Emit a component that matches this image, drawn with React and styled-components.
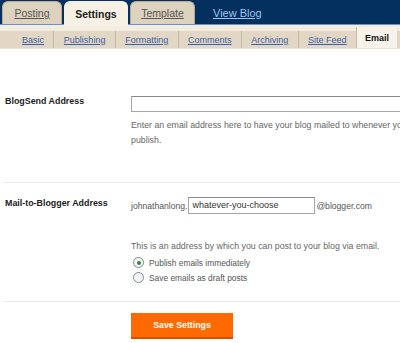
import React from 'react'
import styled, { createGlobalStyle } from 'styled-components'

const GlobalStyle = createGlobalStyle`
  html, body {
    margin: 0;
    padding: 0;
    background: #fff;
    overflow: hidden;
  }
  body {
    font-family: "Liberation Sans", Arial, sans-serif;
    color: #333;
  }
`

const Page = styled.div`
  width: 400px;
  height: 343px;
  overflow: hidden;
`

const TopBar = styled.div`
  height: 25px;
  background: #04305f;
  border-bottom: 1px solid #6f8fc4;
  display: flex;
  align-items: flex-end;
  gap: 2px;
  padding-left: 2px;
  box-sizing: border-box;
`

const Tab = styled.a`
  height: ${p => (p.active ? '25px' : '23px')};
  margin-bottom: ${p => (p.active ? '-2px' : '0')};
  width: ${p => p.w}px;
  display: flex;
  align-items: center;
  justify-content: center;
  box-sizing: border-box;
  border-radius: 6px 6px 0 0;
  background: ${p => (p.active ? '#f6f0e5' : '#ddd2bd')};
  border: 1px solid ${p => (p.active ? '#f6f0e5' : '#b8ab92')};
  border-bottom: none;
  font-size: 10.5px;
  font-weight: ${p => (p.active ? 'bold' : 'normal')};
  color: ${p => (p.active ? '#222' : '#555')};
  text-decoration: ${p => (p.active ? 'none' : 'underline')};
  position: relative;
  z-index: 1;
`

const ViewBlog = styled.a`
  align-self: center;
  margin-left: 16px;
  margin-top: 2px;
  font-size: 11px;
  color: #9cc4f0;
  text-decoration: underline;
`

const Strip = styled.div`
  height: 6px;
  background: #f3ede1;
`

const SubNav = styled.div`
  height: 17px;
  background: #e1d7c4;
  display: flex;
  justify-content: flex-end;
  padding-right: 3px;
  border-bottom: 1px solid #ede6d8;
`

const SubItem = styled.a`
  display: flex;
  align-items: center;
  flex-shrink: 0;
  white-space: nowrap;
  padding: 0 ${p => (p.active ? '8px' : '9.4px')};
  border-left: 1px solid #c4b89f;
  margin-top: ${p => (p.active ? '-4px' : '0')};
  background: ${p => (p.active ? '#f7f3ea' : 'transparent')};
  font-size: 9px;
  font-weight: ${p => (p.active ? 'bold' : 'normal')};
  color: ${p => (p.active ? '#111' : '#3f5ea8')};
  text-decoration: ${p => (p.active ? 'none' : 'underline')};
  &:first-child {
    border-left: none;
  }
`

const Section = styled.div`
  display: grid;
  grid-template-columns: 128px 1fr;
  margin-left: 3px;
  padding: ${p => p.pad};
  border-bottom: 1px solid #ececec;
`

const Label = styled.div`
  padding-left: 2px;
  font-size: 8.9px;
  font-weight: bold;
  color: #222;
  line-height: 10px;
  padding-top: ${p => p.top || '0'};
`

const Field = styled.div`
  display: flex;
  flex-direction: column;
  min-width: 0;
`

const WideInput = styled.div`
  width: 300px;
  height: 16px;
  box-sizing: border-box;
  border: 1px solid #a5a5a5;
  border-top-color: #8a8a8a;
  background: #fff;
`

const Help = styled.p`
  margin: ${p => p.margin || '0'};
  font-size: 8.8px;
  line-height: 15px;
  color: #666;
  width: 285px;
`

const AddressLine = styled.div`
  display: flex;
  align-items: center;
  font-size: 8.6px;
  color: #555;
`

const ShortInput = styled.div`
  width: 127px;
  height: 17px;
  box-sizing: border-box;
  margin: 0 1px 0 1px;
  padding: 1px 3px;
  border: 1px solid #a5a5a5;
  border-top-color: #8a8a8a;
  font-size: 9px;
  color: #333;
  line-height: 13px;
`

const RadioRow = styled.label`
  display: flex;
  align-items: center;
  gap: 5px;
  margin-left: 2px;
  height: 15px;
  font-size: 8.4px;
  color: #555;
`

const Radio = styled.span`
  width: 9px;
  height: 9px;
  border-radius: 50%;
  border: 1px solid #7e8c99;
  background: #f3f5f4;
  display: flex;
  align-items: center;
  justify-content: center;
  &::after {
    content: '';
    width: 4px;
    height: 4px;
    border-radius: 50%;
    background: ${p => (p.checked ? '#2e8b3a' : 'transparent')};
  }
`

const Footer = styled.div`
  padding: 11px 0 0 131px;
`

const SaveButton = styled.button`
  width: 102px;
  height: 26px;
  border: none;
  border-bottom: 2px solid #d95000;
  background: #ff6a00;
  color: #fff;
  font-family: "Liberation Sans", Arial, sans-serif;
  font-size: 8.8px;
  font-weight: bold;
  padding: 0;
`

const mainTabs = [
  { name: 'Posting', w: 60 },
  { name: 'Settings', w: 64 },
  { name: 'Template', w: 65 },
]
const subTabs = ['Basic', 'Publishing', 'Formatting', 'Comments', 'Archiving', 'Site Feed', 'Email']

export default function App() {
  return (
    <Page>
      <GlobalStyle />
      <TopBar>
        {mainTabs.map(t => (
          <Tab key={t.name} w={t.w} active={t.name === 'Settings'}>{t.name}</Tab>
        ))}
        <ViewBlog>View Blog</ViewBlog>
      </TopBar>
      <Strip />
      <SubNav>
        {subTabs.map(t => (
          <SubItem key={t} active={t === 'Email'}>{t}</SubItem>
        ))}
      </SubNav>

      <Section pad="47px 0 34px">
        <Label>BlogSend Address</Label>
        <Field>
          <WideInput />
          <Help margin="6px 0 0">
            Enter an email address here to have your blog mailed to whenever you publish.
          </Help>
        </Field>
      </Section>

      <Section pad="14px 0 16px">
        <Label top="1px">Mail-to-Blogger Address</Label>
        <Field>
          <AddressLine>
            johnathanlong.
            <ShortInput>whatever-you-choose</ShortInput>
            @blogger.com
          </AddressLine>
          <Help margin="25px 0 1px">
            This is an address by which you can post to your blog via email.
          </Help>
          <RadioRow>
            <Radio checked />
            Publish emails immediately
          </RadioRow>
          <RadioRow>
            <Radio />
            Save emails as draft posts
          </RadioRow>
        </Field>
      </Section>

      <Footer>
        <SaveButton>Save Settings</SaveButton>
      </Footer>
    </Page>
  )
}
